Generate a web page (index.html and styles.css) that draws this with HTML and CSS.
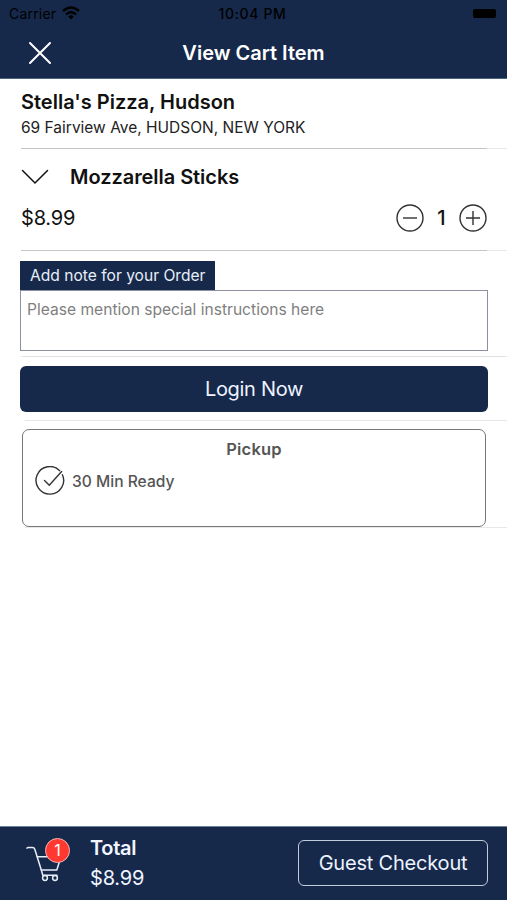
FILE: index.html
```html
<!DOCTYPE html>
<html lang="en">
<head>
<meta charset="utf-8">
<title>View Cart Item</title>
<link rel="stylesheet" href="styles.css">
</head>
<body>
<div class="app">
  <header class="header">
    <div class="status">
      <div class="status-left"><span class="carrier">Carrier</span>
        <svg class="wifi" width="18" height="14" viewBox="0 0 18 14"><g fill="none" stroke="#000" stroke-width="2.5"><path d="M1 5Q9-2 17 5"/><path d="M4 8.4Q9 3.9 14 8.4"/></g><path d="M6.2 10.5Q9 8.1 11.8 10.5L9 13.5Z"/></svg>
      </div>
      <span class="time">10:04 PM</span>
      <div class="status-right"><span class="battery"></span></div>
    </div>
    <div class="titlebar">
      <svg class="close" width="24" height="24" viewBox="0 0 24 24"><path d="M2 2L22 22M22 2L2 22" stroke="#fff" stroke-width="2" stroke-linecap="round"/></svg>
      <h1 class="title">View Cart Item</h1>
    </div>
  </header>
  <main class="content">
    <section class="row store">
      <h2 class="store-name">Stella's Pizza, Hudson</h2>
      <p class="address">69 Fairview Ave, HUDSON, NEW YORK</p>
    </section>
    <section class="row item">
      <div class="item-head">
        <svg width="28" height="16" viewBox="0 0 28 16"><path d="M1.5 1.5L14 14L26.5 1.5" fill="none" stroke="#111" stroke-width="1.5" stroke-linecap="round"/></svg>
        <h2 class="item-name">Mozzarella Sticks</h2>
      </div>
      <div class="item-line">
        <span class="price">$8.99</span>
        <div class="stepper">
          <svg width="28" height="28" viewBox="0 0 28 28" fill="none" stroke="#333" stroke-width="1.4"><circle cx="14" cy="14" r="13"/><path d="M7 14H21"/></svg>
          <span class="qty">1</span>
          <svg width="28" height="28" viewBox="0 0 28 28" fill="none" stroke="#333" stroke-width="1.4"><circle cx="14" cy="14" r="13"/><path d="M7 14H21M14 7V21"/></svg>
        </div>
      </div>
    </section>
    <section class="row note">
      <span class="note-label">Add note for your Order</span>
      <div class="note-box"><span class="placeholder">Please mention special instructions here</span></div>
    </section>
    <section class="row login">
      <button class="login-button"><span class="login-text">Login Now</span></button>
    </section>
    <section class="row pickup">
      <div class="pickup-card">
        <h3 class="pickup-title">Pickup</h3>
        <div class="ready">
          <svg width="30" height="30" viewBox="0 0 30 30" fill="none" stroke="#333" stroke-width="1.4"><path d="M25 5A13.8 13.8 0 1 0 27.2 8.2"/><path d="M9.5 14.5L14.3 19.2L26.6 5.5" stroke-linecap="round"/></svg>
          <span class="ready-text">30 Min Ready</span>
        </div>
      </div>
    </section>
  </main>
  <footer class="footer">
    <div class="cart">
      <svg width="36" height="38" viewBox="0 0 36 38" fill="none" stroke="#e8eef8" stroke-width="1.5" stroke-linecap="round" stroke-linejoin="round"><path d="M2 2.3Q2 1.5 3 1.5H7.5Q9.2 1.5 9.8 3.3L16.3 24L17.8 29.3H32"/><path d="M12.2 10.8H36L31.8 24H16.3"/><circle cx="20" cy="32" r="2.4"/><circle cx="30" cy="32" r="2.4"/></svg>
      <span class="badge">1</span>
    </div>
    <div class="totals"><strong class="total-label">Total</strong><span class="total-price">$8.99</span></div>
    <button class="checkout"><span class="checkout-text">Guest Checkout</span></button>
  </footer>
</div>
</body>
</html>
```
FILE: styles.css
```css
* { box-sizing: border-box; }
body { margin: 0; background: #fff; color: #111; font-family: Inter, "Liberation Sans", sans-serif; }
h1, h2, h3, p { margin: 0; }
svg { display: block; flex: none; }
button { font: inherit; cursor: pointer; padding: 0; }
span, h1, h2, h3, p, strong { white-space: nowrap; }
.app { width: 507px; height: 900px; display: flex; flex-direction: column; overflow: hidden; }
.header { height: 79px; background: #16294b; flex: none; border-bottom: 1px solid #4a6380; }
.status { height: 27px; display: grid; grid-template-columns: 1fr auto 1fr; align-items: center; color: #000; padding: 0 11px 0 9px; }
.status-left { display: flex; align-items: center; gap: 6px; }
.carrier { font-size: 14px; letter-spacing: 0.2px; }
.wifi { margin-top: -2px; }
.time { font-size: 14px; font-weight: 500; letter-spacing: 0.65px; }
.status-right { display: flex; justify-content: flex-end; }
.battery { width: 23px; height: 9px; border-radius: 2px; background: #000; }
.titlebar { height: 51px; display: grid; grid-template-columns: 1fr auto 1fr; align-items: center; padding: 0 28px; }
.title { color: #fff; font-size: 20px; font-weight: 600; line-height: 24px; }
.content { flex: 1; }
.row { padding: 0 20px; background: linear-gradient(#c5c5c8, #c5c5c8) 21px 100% / 466px 1px no-repeat, linear-gradient(#e8e8ea, #e8e8ea) 21px 100% / 486px 1px no-repeat; }
.store { height: 70px; padding: 11px 21px 0; }
.store-name { font-size: 20px; font-weight: 600; line-height: 24px; }
.address { font-size: 15.5px; line-height: 20px; margin-top: 4px; color: #222; }
.item { height: 102px; padding-top: 16px; }
.item-head { display: flex; align-items: center; gap: 21px; padding-left: 1px; height: 24px; }
.item-name { font-size: 20px; font-weight: 600; letter-spacing: -0.05px; }
.item-line { display: flex; justify-content: space-between; align-items: center; margin-top: 15px; height: 28px; }
.price { font-size: 20px; padding-left: 1px; letter-spacing: -0.2px; }
.stepper { display: flex; align-items: center; }
.qty { width: 35px; text-align: center; font-size: 20px; font-weight: 500; }
.note { height: 106px; padding-top: 10px; background: linear-gradient(#e1e1e4, #e1e1e4) 21px 100% / 486px 1px no-repeat; }
.note-label { display: flex; align-items: center; width: 195px; height: 29px; padding-left: 10px; background: #16294b; color: #e8eef8; font-size: 15.6px; }
.note-box { height: 61px; border: 1px solid #8c90a0; width: 468px; padding: 9px 6px; line-height: 19px; }
.placeholder { font-size: 15.6px; color: #808080; }
.login { height: 64px; padding-top: 9px; background: linear-gradient(#e6e6e8, #e6e6e8) 25px 100% / 482px 1px no-repeat; }
.login-button { width: 468px; height: 46px; border: 0; border-radius: 6px; background: #16294b; color: #edf3ff; font-size: 20px; letter-spacing: -0.3px; }
.pickup { height: 107px; padding: 8px 21px 0 22px; background: linear-gradient(#e8e8ea, #e8e8ea) 25px 100% / 482px 1px no-repeat; }
.pickup-card { height: 98px; border: 1.5px solid #777; border-radius: 7px; background: #fff; padding: 9px 12px; color: #555; }
.pickup-title { font-size: 16.5px; font-weight: 600; line-height: 20px; letter-spacing: 0.2px; text-align: center; }
.ready { display: flex; align-items: center; gap: 7px; margin-top: 7px; }
.ready-text { font-size: 15.6px; font-weight: 500; }
.footer { height: 74px; flex: none; display: flex; background: #16294b; border-top: 1px solid #6f829b; padding: 12px 19px 0 25px; color: #f0f5ff; }
.cart { position: relative; width: 65px; padding-top: 7px; }
.badge { position: absolute; left: 20px; top: -1px; width: 25px; height: 25px; border: 1px solid #f3b5b6; border-radius: 50%; background: #ff3830; color: #fff; font-size: 16px; line-height: 23px; text-align: center; }
.totals { display: flex; flex-direction: column; line-height: 30px; margin-top: -6px; flex: 1; }
.total-label { font-size: 20px; font-weight: 600; letter-spacing: -0.3px; }
.total-price { font-size: 20px; letter-spacing: -0.2px; }
.checkout { width: 190px; height: 46px; margin-top: 1px; border: 1.5px solid #c2cbd9; border-radius: 6px; background: transparent; color: #edf3ff; font-size: 20px; letter-spacing: -0.2px; }
```
